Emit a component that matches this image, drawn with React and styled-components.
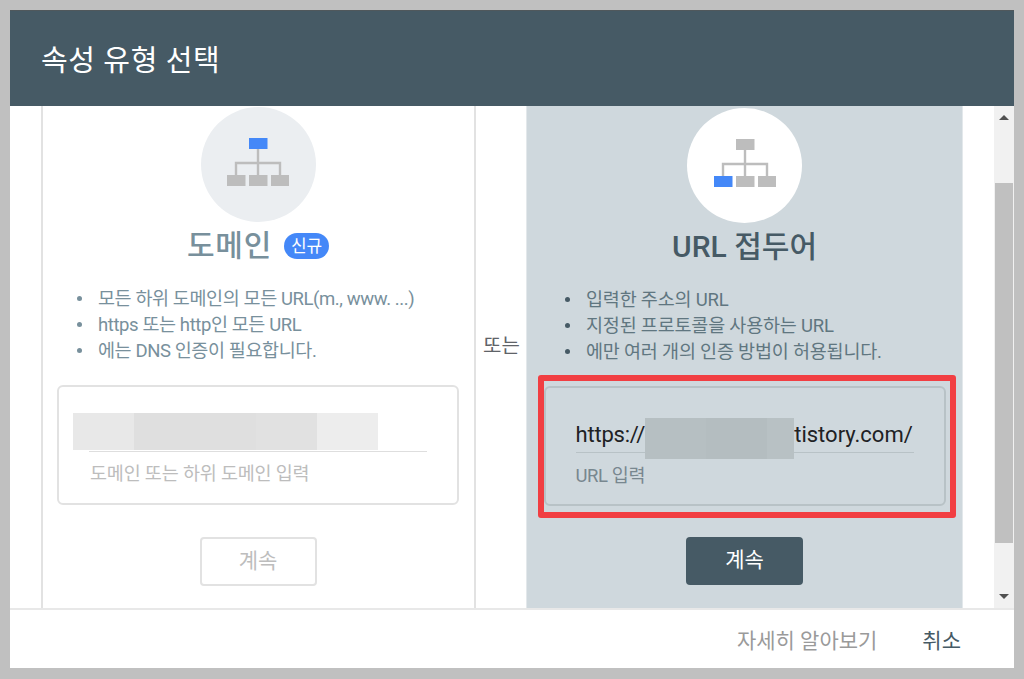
import React from 'react';
import styled, { createGlobalStyle } from 'styled-components';

const GlobalStyle = createGlobalStyle`
	html, body {
		margin: 0;
		height: 100%;
		background: #c0c0c0;
		overflow: hidden;
		font-family: Roboto, "Noto Sans CJK KR", sans-serif;
	}
`;

const Page = styled.div`
	box-sizing: border-box;
	height: 679px;
	padding: 10px 10px 11px;
`;

const Dialog = styled.div`
	height: 658px;
	display: flex;
	flex-direction: column;
	background: #fff;
`;

const Header = styled.header`
	height: 96px;
	flex: none;
	box-sizing: border-box;
	padding: 30px 31px 0;
	border-top: 1px solid #50585c;
	background: #465a65;
	color: #fff;
`;

const Title = styled.h1`
	margin: 0;
	font-size: 29px;
	line-height: 40px;
	font-weight: 400;
	letter-spacing: 0.6px;
`;

const Body = styled.div`
	flex: 1;
	min-height: 0;
	display: flex;
`;

const Content = styled.div`
	flex: 1;
	display: flex;
	padding-left: 31px;
	overflow: hidden;
	position: relative;
`;

const Card = styled.section`
	box-sizing: border-box;
	width: ${(p) => (p.$active ? '437px' : '435px')};
	flex: none;
	display: flex;
	flex-direction: column;
	align-items: center;
	padding: ${(p) => (p.$active ? '2px 0 0' : '1px 1px 0 0')};
	background: ${(p) => (p.$active ? '#cfd8dd' : '#fff')};
	border-left: ${(p) => (p.$active ? '1px solid #e3e8eb' : '2px solid #e2e2e2')};
	border-right: ${(p) => (p.$active ? '1px solid #e3e8eb' : '2px solid #e2e2e2')};
`;

const Or = styled.div`
	width: 50px;
	flex: none;
	box-sizing: border-box;
	padding: 227px 0 0 7px;
	font-size: 20px;
	line-height: 26px;
	color: #5f6368;
`;

const Circle = styled.div`
	width: 115px;
	height: 115px;
	flex: none;
	border-radius: 50%;
	display: flex;
	align-items: center;
	justify-content: center;
	background: ${(p) => (p.$active ? '#fff' : '#ebeef1')};
`;

const HeadingRow = styled.div`
	box-sizing: border-box;
	height: 50px;
	margin-top: 1px;
	padding-bottom: 4px;
	display: flex;
	align-items: center;
	gap: 12px;
`;

const Heading = styled.h2`
	margin: 0;
	font-size: 30px;
	line-height: 44px;
	font-weight: 500;
	letter-spacing: ${(p) => (p.$active ? '0' : '0.8px')};
	color: ${(p) => (p.$active ? '#465a65' : '#78909c')};
`;

const Badge = styled.span`
	width: 45px;
	height: 26px;
	border-radius: 13px;
	background: #4488f8;
	color: #fff;
	font-size: 17px;
	line-height: 26px;
	text-align: center;
`;

const Features = styled.ul`
	box-sizing: border-box;
	width: 100%;
	margin: 13px 0 0;
	padding: 0 0 0 ${(p) => (p.$active ? '59px' : '55px')};
	list-style: none;
	font-size: 18.5px;
	letter-spacing: ${(p) => (p.$active ? '-0.2px' : '-0.4px')};
	line-height: 26px;
	color: ${(p) => (p.$active ? '#607680' : '#78909c')};
`;

const Feature = styled.li`
	position: relative;
	&::before {
		content: '';
		position: absolute;
		left: -21px;
		top: 10px;
		width: 5px;
		height: 5px;
		border-radius: 50%;
		background: ${(p) => (p.$active ? '#465a65' : '#78909c')};
	}
`;

const Field = styled.div`
	position: relative;
	box-sizing: border-box;
	width: 402px;
	height: 120px;
	margin-top: 21px;
	padding: 30px 30px 0;
	border: 2px solid ${(p) => (p.$active ? '#b8c2c6' : '#e2e2e2')};
	border-radius: 6px;
`;

const InputLine = styled.div`
	height: 34px;
	border-bottom: 1px solid ${(p) => (p.$active ? '#b8c2c6' : '#dedede')};
	display: flex;
	align-items: center;
	font-size: 22px;
	line-height: 34px;
	color: #202124;
	white-space: nowrap;
`;

const Scheme = styled.span`
	letter-spacing: -0.2px;
`;

const FieldLabel = styled.div`
	margin-top: ${(p) => (p.$active ? '10px' : '9px')};
	padding-left: ${(p) => (p.$active ? '0' : '1px')};
	font-size: 18.5px;
	letter-spacing: ${(p) => (p.$active ? '-0.4px' : '-0.2px')};
	line-height: 26px;
	color: ${(p) => (p.$active ? '#78878f' : '#bdbdbd')};
`;

const Mask = styled.div`
	display: flex;
	flex: none;
	height: ${(p) => (p.$inline ? '41px' : '37px')};
	position: ${(p) => (p.$inline ? 'relative' : 'absolute')};
	left: ${(p) => (p.$inline ? 'auto' : '14px')};
	top: ${(p) => (p.$inline ? '3px' : '26px')};
`;

const MaskPart = styled.span`
	width: ${(p) => p.$w}px;
	background: ${(p) => p.$c};
`;

const Button = styled.button`
	box-sizing: border-box;
	width: 117px;
	height: ${(p) => (p.$active ? '48px' : '49px')};
	margin-top: ${(p) => (p.$active ? '31px' : '32px')};
	flex: none;
	padding: 0 0 6px;
	border-radius: 4px;
	border: ${(p) => (p.$active ? 'none' : '2px solid #e2e2e2')};
	background: ${(p) => (p.$active ? '#465a65' : '#fff')};
	color: ${(p) => (p.$active ? '#fff' : '#bdbdbd')};
	font: inherit;
	font-size: 21px;
`;

const Highlight = styled.div`
	position: absolute;
	left: 528px;
	top: 269px;
	width: 418px;
	height: 143px;
	box-sizing: border-box;
	border: 6px solid #f13e42;
	border-radius: 3px;
`;

const Scrollbar = styled.div`
	width: 20px;
	flex: none;
	display: flex;
	flex-direction: column;
	align-items: center;
	background: #f1f1f1;
`;

const ScrollArrow = styled.div`
	flex: none;
	width: 0;
	height: 0;
	margin: ${(p) => (p.$up ? '9px 0 0' : '0 0 9px')};
	border-left: 5px solid transparent;
	border-right: 5px solid transparent;
	border-bottom: ${(p) => (p.$up ? '5px solid #505050' : 'none')};
	border-top: ${(p) => (p.$up ? 'none' : '5px solid #505050')};
`;

const ScrollTrack = styled.div`
	flex: 1;
	width: 100%;
	padding-top: 63px;
	box-sizing: border-box;
	display: flex;
	justify-content: center;
`;

const ScrollThumb = styled.div`
	width: 18px;
	height: 360px;
	background: #c0c0c0;
`;

const Footer = styled.footer`
	height: 60px;
	flex: none;
	box-sizing: border-box;
	border-top: 2px solid #e8e8e8;
	display: flex;
	align-items: center;
	justify-content: flex-end;
	gap: 45px;
	padding: 0 53px 0 0;
	font-size: 21px;
`;

const FooterLink = styled.span`
	color: ${(p) => (p.$strong ? '#465a65' : '#9a9a9a')};
`;

function SiteTree({ highlight, gray = '#bdbdbd' }) {
	const boxes = [
		{ id: 'top', x: 24, y: 0 },
		{ id: 'left', x: 2, y: 37 },
		{ id: 'mid', x: 24, y: 37 },
		{ id: 'right', x: 46, y: 37 },
	];
	return (
		<svg width="64" height="48" viewBox="0 0 64 48" style={{ margin: '-6px 0 0 -2px' }}>
			<path d="M33 10V37M11 37V25H55V37" fill="none" stroke={gray} strokeWidth="2.4" />
			{boxes.map((b) => (
				<rect
					key={b.id}
					x={b.x}
					y={b.y}
					width="18.5"
					height="11"
					fill={b.id === highlight ? '#4488f8' : gray}
				/>
			))}
		</svg>
	);
}

export default function App() {
	return (
		<Page>
			<GlobalStyle />
			<Dialog>
				<Header>
					<Title>속성 유형 선택</Title>
				</Header>
				<Body>
					<Content>
						<Card>
							<Circle>
								<SiteTree highlight="top" />
							</Circle>
							<HeadingRow>
								<Heading>도메인</Heading>
								<Badge>신규</Badge>
							</HeadingRow>
							<Features>
								<Feature>모든 하위 도메인의 모든 URL(m., www. ...)</Feature>
								<Feature>https 또는 http인 모든 URL</Feature>
								<Feature>에는 DNS 인증이 필요합니다.</Feature>
							</Features>
							<Field>
								<InputLine />
								<Mask>
									<MaskPart $w={61} $c="#e8e8e8" />
									<MaskPart $w={122} $c="#dfdfdf" />
									<MaskPart $w={61} $c="#e1e1e1" />
									<MaskPart $w={61} $c="#ededed" />
								</Mask>
								<FieldLabel>도메인 또는 하위 도메인 입력</FieldLabel>
							</Field>
							<Button>계속</Button>
						</Card>
						<Or>또는</Or>
						<Card $active>
							<Circle $active>
								<SiteTree highlight="left" />
							</Circle>
							<HeadingRow>
								<Heading $active>URL 접두어</Heading>
							</HeadingRow>
							<Features $active>
								<Feature $active>입력한 주소의 URL</Feature>
								<Feature $active>지정된 프로토콜을 사용하는 URL</Feature>
								<Feature $active>에만 여러 개의 인증 방법이 허용됩니다.</Feature>
							</Features>
							<Field $active>
								<InputLine $active>
									<Scheme>https://</Scheme>
									<Mask $inline>
										<MaskPart $w={61} $c="#b6bfc2" />
										<MaskPart $w={61} $c="#b4bdc0" />
										<MaskPart $w={27} $c="#b8c1c4" />
									</Mask>
									tistory.com/
								</InputLine>
								<FieldLabel $active>URL 입력</FieldLabel>
							</Field>
							<Button $active>계속</Button>
						</Card>
						<Highlight />
					</Content>
					<Scrollbar>
						<ScrollArrow $up />
						<ScrollTrack>
							<ScrollThumb />
						</ScrollTrack>
						<ScrollArrow />
					</Scrollbar>
				</Body>
				<Footer>
					<FooterLink>자세히 알아보기</FooterLink>
					<FooterLink $strong>취소</FooterLink>
				</Footer>
			</Dialog>
		</Page>
	);
}
